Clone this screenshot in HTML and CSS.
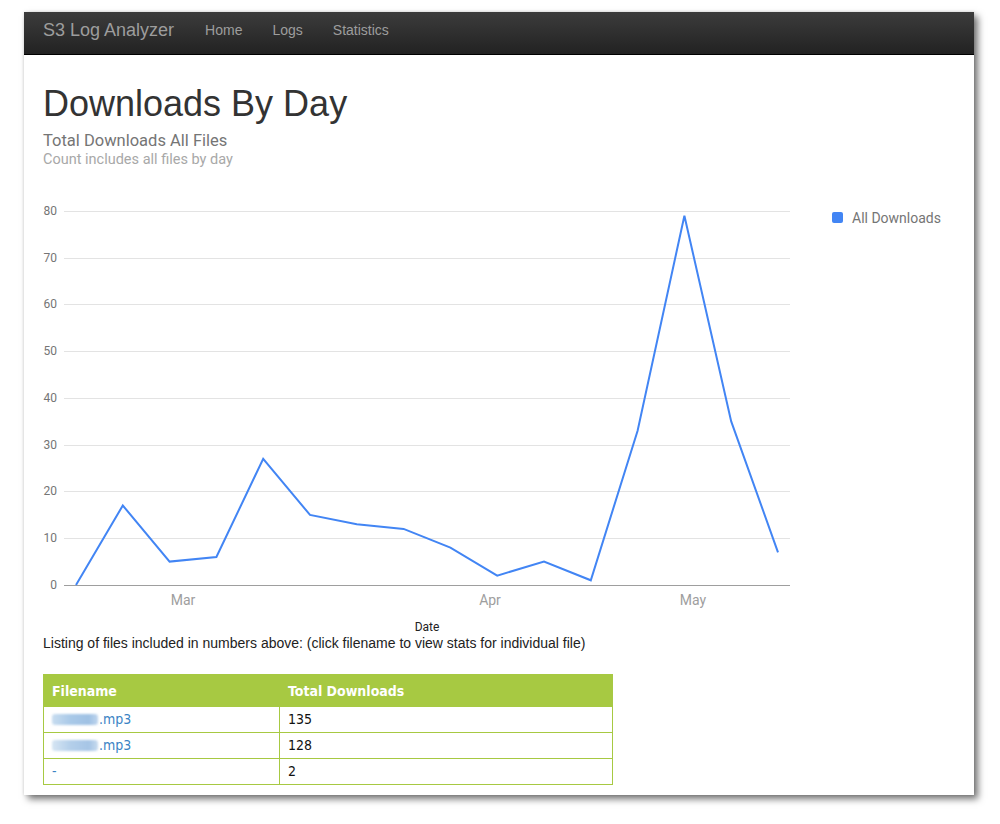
FILE: index.html
```html
<!DOCTYPE html>
<html>
<head>
<meta charset="utf-8">
<title>S3 Log Analyzer</title>
<link rel="stylesheet" href="styles.css">
</head>
<body>
<div class="window">
  <nav class="navbar">
    <span class="brand">S3 Log Analyzer</span>
    <a class="navlink" href="#">Home</a>
    <a class="navlink" href="#">Logs</a>
    <a class="navlink" href="#">Statistics</a>
  </nav>
  <main class="content">
    <h1 class="title">Downloads By Day</h1>
    <div class="ctitle">Total Downloads All Files</div>
    <div class="csub">Count includes all files by day</div>
    <svg class="chart" width="950" height="465" viewBox="24 168 950 465" xmlns="http://www.w3.org/2000/svg">
      <g class="grid" stroke="#e3e3e3" stroke-width="1">
        <line x1="64" x2="790" y1="211.5" y2="211.5"/>
        <line x1="64" x2="790" y1="258.5" y2="258.5"/>
        <line x1="64" x2="790" y1="304.5" y2="304.5"/>
        <line x1="64" x2="790" y1="351.5" y2="351.5"/>
        <line x1="64" x2="790" y1="398.5" y2="398.5"/>
        <line x1="64" x2="790" y1="445.5" y2="445.5"/>
        <line x1="64" x2="790" y1="491.5" y2="491.5"/>
        <line x1="64" x2="790" y1="538.5" y2="538.5"/>
      </g>
      <line x1="64" x2="790" y1="585.5" y2="585.5" stroke="#9e9e9e" stroke-width="1"/>
      <g class="ylabels" text-anchor="end">
        <text x="57" y="215">80</text>
        <text x="57" y="262">70</text>
        <text x="57" y="308">60</text>
        <text x="57" y="355">50</text>
        <text x="57" y="402">40</text>
        <text x="57" y="449">30</text>
        <text x="57" y="495">20</text>
        <text x="57" y="542">10</text>
        <text x="57" y="589">0</text>
      </g>
      <g class="xlabels" text-anchor="middle">
        <text x="183" y="605">Mar</text>
        <text x="490" y="605">Apr</text>
        <text x="693" y="605">May</text>
      </g>
      <text class="axistitle" x="427" y="631" text-anchor="middle">Date</text>
      <polyline fill="none" stroke="#4285f4" stroke-width="2" stroke-linejoin="miter"
        points="76,585 122.8,505.5 169.6,561.6 216.4,557 263.2,458.8 310,514.9 356.8,524.2 403.6,528.9 450.4,547.6 497.2,575.6 544,561.6 590.8,580.3 637.6,430.7 684.4,215.7 731.2,421.4 778,552.3"/>
      <rect x="832" y="212" width="11" height="11" rx="2" fill="#4285f4"/>
      <text class="legend" x="852" y="223">All Downloads</text>
    </svg>
    <p class="listing">Listing of files included in numbers above: (click filename to view stats for individual file)</p>
    <table class="files">
      <thead>
        <tr><th class="c1">Filename</th><th>Total Downloads</th></tr>
      </thead>
      <tbody>
        <tr><td><a href="#"><span class="blur"></span>.mp3</a></td><td>135</td></tr>
        <tr><td><a href="#"><span class="blur b2"></span>.mp3</a></td><td>128</td></tr>
        <tr><td><a href="#">-</a></td><td>2</td></tr>
      </tbody>
    </table>
  </main>
</div>
</body>
</html>
```

FILE: styles.css
```css
html, body {
  margin: 0;
  padding: 0;
  background: #ffffff;
}

body {
  min-height: 824px;
}

.window {
  margin: 12px 0 0 24px;
  width: 950px;
  height: 783px;
  background: #ffffff;
  box-shadow: 4px 4px 7px rgba(0, 0, 0, 0.55), 0 0 3px rgba(0, 0, 0, 0.12);
  overflow: hidden;
}

.navbar {
  box-sizing: border-box;
  height: 43px;
  padding: 0 0 6px 19px;
  display: flex;
  align-items: center;
  gap: 30px;
  background: linear-gradient(#3c3c3c, #222222);
  border-bottom: 1px solid #000000;
  font-family: "Liberation Sans", Arial, sans-serif;
}

.brand {
  font-size: 18px;
  color: #9d9d9d;
  margin-right: 1px;
}

.navlink {
  font-size: 14px;
  color: #9d9d9d;
  text-decoration: none;
}

.content {
  padding: 0 19px;
}

.title {
  margin: 29px 0 0;
  font-family: "Liberation Sans", Arial, sans-serif;
  font-weight: normal;
  font-size: 36px;
  line-height: 40px;
  color: #333333;
}

.ctitle {
  margin-top: 7px;
  font-family: Roboto, sans-serif;
  font-size: 16.5px;
  line-height: 19px;
  color: #757575;
}

.csub {
  margin-top: 2px;
  font-family: Roboto, sans-serif;
  font-size: 14.5px;
  line-height: 16px;
  color: #a8a8a8;
}

.chart {
  display: block;
  margin-left: -19px;
  font-family: Roboto, sans-serif;
}

.ylabels text {
  font-size: 12px;
  fill: #757575;
}

.xlabels text {
  font-size: 14px;
  fill: #9e9e9e;
}

.axistitle {
  font-size: 12px;
  fill: #222222;
}

.legend {
  font-size: 14px;
  fill: #757575;
}

.listing {
  margin: 0;
  font-family: "Liberation Sans", Arial, sans-serif;
  font-size: 14px;
  line-height: 20px;
  color: #222222;
}

.files {
  margin-top: 21px;
  width: 570px;
  border-collapse: collapse;
  font-family: "DejaVu Sans Condensed", "DejaVu Sans", sans-serif;
  font-size: 14px;
}

.files th {
  background: #a7c942;
  color: #ffffff;
  font-weight: bold;
  text-align: left;
  padding: 6px 8px 5px;
  line-height: 20px;
  border: 1px solid #a7c942;
}

.files th.c1 {
  width: 219px;
}

.files td {
  padding: 2px 8px 3px;
  line-height: 20px;
  border: 1px solid #a7c942;
  color: #111111;
}

.files a {
  color: #3b83c4;
  text-decoration: none;
}

.blur {
  display: inline-block;
  width: 46px;
  height: 11px;
  margin-right: 1px;
  vertical-align: -1px;
  background: linear-gradient(90deg, #c8ddf0, #a9c9e8 40%, #9fc1e4 80%, #c0d6ee);
  filter: blur(1.3px);
  border-radius: 3px;
}

.blur.b2 {
  background: linear-gradient(90deg, #d6e5f3, #b4cfea 40%, #a6c5e6 80%, #c8dbef);
}
```
